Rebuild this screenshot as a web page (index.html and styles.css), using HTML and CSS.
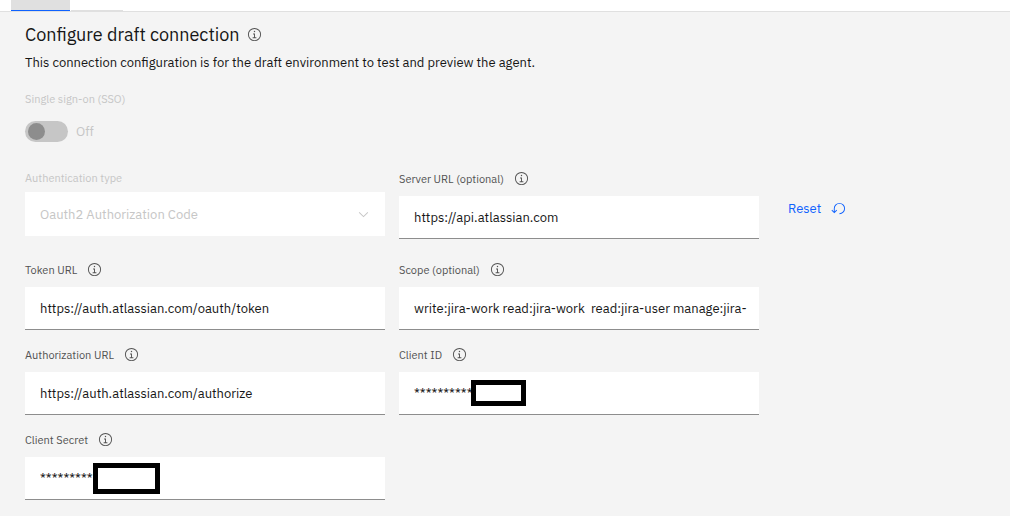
FILE: index.html
```html
<!DOCTYPE html>
<html lang="en">
<head>
  <meta charset="UTF-8" />
  <title>Configure draft connection</title>
  <meta name="viewport" content="width=device-width, initial-scale=1.0" />
  <link rel="stylesheet" href="styles.css">
</head>
<body>
  <svg class="sprite" aria-hidden="true">
    <symbol id="icon-info" viewBox="0 0 32 32">
      <path d="M17 22V14H13V16H15V22H12V24H20V22H17ZM16 8A1.5 1.5 0 1 0 17.5 9.5 1.5 1.5 0 0 0 16 8Z"/>
      <path d="M16 30A14 14 0 1 1 30 16 14 14 0 0 1 16 30ZM16 4A12 12 0 1 0 28 16 12 12 0 0 0 16 4Z"/>
    </symbol>
  </svg>

  <nav class="tabs" aria-label="Environment">
    <button class="tab tab-active" type="button" aria-label="Draft"></button>
    <button class="tab" type="button" aria-label="Live"></button>
  </nav>

  <main class="panel">
    <h1 class="title">
      Configure draft connection
      <svg class="info"><use href="#icon-info"/></svg>
    </h1>
    <p class="description">This connection configuration is for the draft environment to test and preview the agent.</p>

    <label class="sso-label" for="sso">Single sign-on (SSO)</label>
    <div class="sso">
      <input class="toggle" type="checkbox" role="switch" id="sso" disabled>
      <span class="sso-state">Off</span>
    </div>

    <form class="form">
      <div class="field field-disabled">
        <label class="label" for="auth-type">Authentication type</label>
        <div class="control">
          <select class="select" id="auth-type" disabled>
            <option>Oauth2 Authorization Code</option>
          </select>
          <svg class="chevron" viewBox="0 0 16 16"><path d="M8 11 3 6 3.7 5.3 8 9.6 12.3 5.3 13 6Z"/></svg>
        </div>
      </div>
      <div class="field field-first">
        <label class="label" for="server-url">Server URL (optional) <svg class="info"><use href="#icon-info"/></svg></label>
        <input class="input" type="text" id="server-url" value="https://api.atlassian.com">
      </div>
      <button class="reset" type="reset">
        Reset
        <svg class="reset-icon" viewBox="0 0 32 32"><path d="M18 28A12 12 0 1 0 6 16V22.2L2.4 18.6 1 20 7 26 13 20 11.6 18.6 8 22.2V16A10 10 0 1 1 18 26Z"/></svg>
      </button>

      <div class="field">
        <label class="label" for="token-url">Token URL <svg class="info"><use href="#icon-info"/></svg></label>
        <input class="input" type="text" id="token-url" value="https://auth.atlassian.com/oauth/token">
      </div>
      <div class="field">
        <label class="label" for="scope">Scope (optional) <svg class="info"><use href="#icon-info"/></svg></label>
        <input class="input" type="text" id="scope" value="write:jira-work read:jira-work  read:jira-user manage:jira-">
      </div>

      <div class="field field-left">
        <label class="label" for="authorization-url">Authorization URL <svg class="info"><use href="#icon-info"/></svg></label>
        <input class="input" type="text" id="authorization-url" value="https://auth.atlassian.com/authorize">
      </div>
      <div class="field">
        <label class="label" for="client-id">Client ID <svg class="info"><use href="#icon-info"/></svg></label>
        <div class="control">
          <input class="input" type="text" id="client-id" value="**********">
          <span class="redaction redaction-id"></span>
        </div>
      </div>

      <div class="field field-left">
        <label class="label" for="client-secret">Client Secret <svg class="info"><use href="#icon-info"/></svg></label>
        <div class="control">
          <input class="input" type="text" id="client-secret" value="**********">
          <span class="redaction redaction-secret"></span>
        </div>
      </div>
    </form>
  </main>
</body>
</html>
```

FILE: styles.css
```css
* {
  box-sizing: border-box;
}

body {
  margin: 0;
  background: #f4f4f4;
  color: #161616;
  font-family: "IBM Plex Sans", Roboto, sans-serif;
  font-size: 13px;
}

.sprite {
  display: none;
}

.tabs {
  display: flex;
  gap: 1px;
  height: 12px;
  padding-left: 11px;
  background: white;
  border-bottom: 1px solid #e0e0e0;
}

.tab {
  width: 52px;
  padding: 0;
  background: none;
  border: none;
  border-bottom: 1px solid #e0e0e0;
}

.tab-active {
  width: 59px;
  background: #e0e0e0;
  border-bottom-color: #0f62fe;
}

.panel {
  padding: 12px 25px 17px;
}

.title {
  display: flex;
  align-items: center;
  gap: 7px;
  margin: 0;
  font-size: 18px;
  font-weight: 400;
  line-height: 22px;
}

.info {
  flex: none;
  width: 15px;
  height: 15px;
  margin-bottom: 2px;
  fill: #525252;
}

.description {
  margin: 8px 0 0;
  line-height: 18px;
}

.sso-label {
  display: block;
  margin-top: 19px;
  color: #c6c6c6;
  font-size: 11px;
  line-height: 16px;
}

.sso {
  display: flex;
  align-items: center;
  gap: 8px;
  margin-top: 14px;
  color: #c6c6c6;
}

.toggle {
  appearance: none;
  width: 43px;
  height: 21px;
  margin: 0;
  padding: 2px 3px;
  background: #c6c6c6;
  border-radius: 11px;
}

.toggle::before {
  content: "";
  display: block;
  width: 17px;
  height: 17px;
  background: #8d8d8d;
  border-radius: 50%;
}

.form {
  display: grid;
  grid-template-columns: 1fr 1fr 212px;
  column-gap: 14px;
  row-gap: 17px;
  margin-top: 28px;
}

.field-first {
  padding: 1px 0 6px;
}

.field-left {
  grid-column: 1;
}

.label {
  display: flex;
  align-items: center;
  gap: 10px;
  height: 16px;
  margin-bottom: 9px;
  color: #525252;
  font-size: 11px;
}

.field-disabled .label {
  margin-bottom: 6px;
  color: #c6c6c6;
}

.control {
  position: relative;
}

.input,
.select {
  display: block;
  width: 100%;
  height: 43px;
  padding: 0 12px 0 15px;
  background: white;
  border: none;
  border-bottom: 1px solid #8d8d8d;
  border-radius: 0;
  color: #161616;
  font: inherit;
}

.select {
  appearance: none;
  height: 44px;
  border-bottom: none;
  color: #c6c6c6;
  opacity: 1;
}

.chevron {
  position: absolute;
  top: 15px;
  right: 14px;
  width: 15px;
  height: 15px;
  fill: #c6c6c6;
  pointer-events: none;
}

/* covers the end of a masked value */
.redaction {
  position: absolute;
  background: white;
  border: 5px solid black;
}

.redaction-id {
  top: 8px;
  left: 72px;
  width: 55px;
  height: 26px;
}

.redaction-secret {
  top: 6px;
  left: 68px;
  width: 67px;
  height: 31px;
}

.reset {
  display: flex;
  align-items: center;
  align-self: start;
  justify-self: start;
  gap: 10px;
  height: 30px;
  margin: 23px 0 0 15px;
  padding: 0;
  background: none;
  border: none;
  color: #0f62fe;
  font: inherit;
  cursor: pointer;
}

.reset-icon {
  width: 15px;
  height: 15px;
  fill: currentColor;
}
```
